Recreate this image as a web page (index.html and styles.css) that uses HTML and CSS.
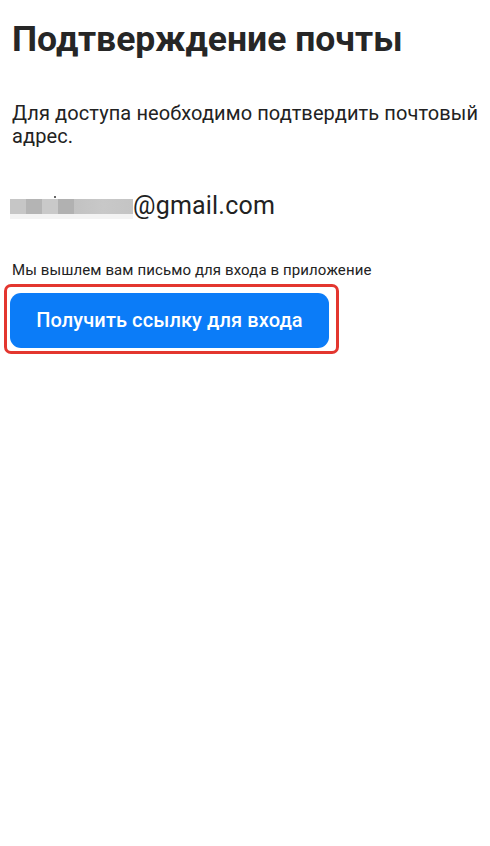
FILE: index.html
```html
<!DOCTYPE html>
<html lang="ru">
<head>
<meta charset="utf-8">
<title>Подтверждение почты</title>
<link rel="stylesheet" href="styles.css">
</head>
<body>
<main class="page">
  <h1 class="title">Подтверждение почты</h1>
  <p class="lead">Для доступа необходимо подтвердить почтовый адрес.</p>
  <div class="email">
    <span class="blur" aria-hidden="true">
      <span class="px px1"></span><span class="px px2"></span><span class="px px3"><i class="dot"></i></span><span class="px px4"></span><span class="px px5"></span>
    </span><span class="domain">@gmail.com</span>
  </div>
  <p class="hint">Мы вышлем вам письмо для входа в приложение</p>
  <div class="highlight">
    <button class="btn" type="button">Получить ссылку для входа</button>
  </div>
</main>
</body>
</html>
```

FILE: styles.css
```css
* { box-sizing: border-box; }
html, body { margin: 0; padding: 0; background: #fff; }
body {
  font-family: Roboto, "Noto Sans", "Liberation Sans", sans-serif;
  color: #212121;
  width: 490px;
  height: 846px;
}
.page {
  padding: 0 0 0 12px;
}
.title {
  margin: 0;
  padding-top: 18px;
  font-size: 35.5px;
  line-height: 42px;
  font-weight: 700;
  color: #262626;
}
.lead {
  margin: 42px 0 0;
  font-size: 20px;
  line-height: 23px;
  letter-spacing: 0.1px;
  color: #222;
  padding-right: 0;
}
.email {
  margin: 43px 0 0 -2px;
  display: flex;
  align-items: flex-start;
  height: 30px;
}
.blur {
  display: flex;
  height: 20px;
  margin-top: 7.5px;
  position: relative;
}
.px { display: block; height: 15px; }
.px1 { width: 16px; background: #c6c6c6; }
.px2 { width: 16px; background: #b4b4b4; }
.px3 { width: 16px; background: #c9c9c9; position: relative; }
.px4 { width: 16px; background: #b1b1b1; }
.px5 { width: 59px; background: linear-gradient(90deg, #c2c2c2, #c8c8c8 50%, #c4c4c4); }
.blur::after {
  content: "";
  position: absolute;
  left: 0; right: 0; top: 15px; height: 5px;
  background: #f3f3f3;
}
.dot {
  position: absolute;
  left: 12px; top: -3px;
  width: 2px; height: 2px;
  background: #333;
  border-radius: 50%;
}
.domain {
  font-size: 25px;
  line-height: 30px;
  letter-spacing: 0.2px;
  color: #222;
}
.hint {
  margin: 39.5px 0 0;
  font-size: 15px;
  line-height: 18px;
  letter-spacing: 0.11px;
  color: #222;
}
.highlight {
  margin: 5px 0 0 -8px;
  width: 335px;
  height: 70px;
  border: 3px solid #e3362f;
  border-radius: 7px;
  padding: 6px 7px 3px 3px;
}
.btn {
  display: block;
  width: 100%;
  height: 100%;
  border: 0;
  border-radius: 11px;
  background: #0b7cf8;
  color: #fff;
  font-family: Roboto, "Noto Sans", "Liberation Sans", sans-serif;
  font-size: 20px;
  font-weight: 500;
  letter-spacing: 0.1px;
  cursor: pointer;
}
```
